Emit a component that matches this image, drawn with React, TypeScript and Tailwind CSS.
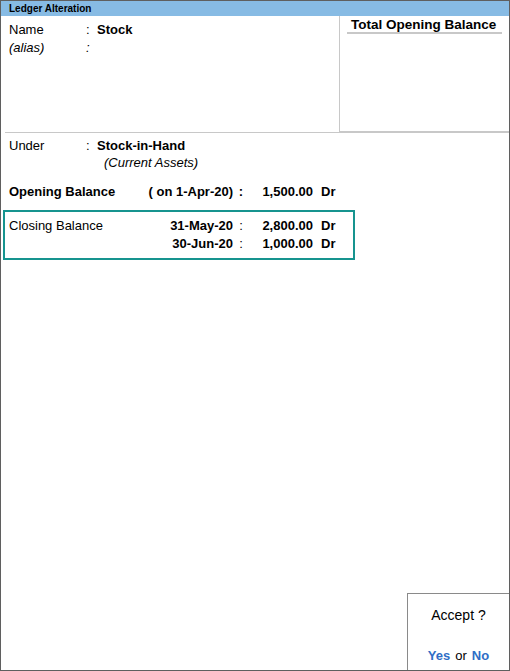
import React from 'react';

const font = { fontFamily: '"Liberation Sans", Arial, sans-serif' };

function BalanceRow({ label, date, amount, bold }: { label?: string; date: string; amount: string; bold?: boolean }) {
  return (
    <div className="flex w-[330px] leading-[18px] whitespace-nowrap">
      <span className={`flex-1 ${bold ? 'font-bold' : ''}`}>{label}</span>
      <span className="text-right font-bold">{date}</span>
      <span className={`w-[16px] text-center ${bold ? 'font-bold' : ''}`}>:</span>
      <span className="w-[64px] text-right font-bold">{amount}</span>
      <span className="w-[26px] pl-2 font-bold">Dr</span>
    </div>
  );
}

export default function App() {
  return (
    <div style={font} className="w-[510px] h-[671px] border border-[#5f5f5f] bg-white text-[13px] text-black flex flex-col overflow-hidden">
      <div className="h-[15px] bg-[#87bbe4] pl-2 text-[10px] font-bold leading-[15px]">Ledger Alteration</div>

      <div className="flex h-[117px]">
        <div className="flex-1 pl-[4px]">
          <div className="h-full border-b border-[#c8c8c8] pl-1 pt-[5px]">
            <div className="flex leading-[18px]">
              <span className="w-[77px]">Name</span>
              <span className="w-[11px]">:</span>
              <span className="font-bold">Stock</span>
            </div>
            <div className="flex leading-[18px] italic">
              <span className="w-[77px]">(alias)</span>
              <span>:</span>
            </div>
          </div>
        </div>
        <div className="w-[170px] border-l border-b-2 border-[#c8c8c8]">
          <div className="mx-[7px] border-b-2 border-[#c8c8c8] pl-[4px] text-[13.5px] font-bold leading-[15px] pt-px">
            Total Opening Balance
          </div>
        </div>
      </div>

      <div className="flex-1 flex flex-col">
        <div className="pl-2 pt-[4px]">
          <div className="flex leading-[17px]">
            <span className="w-[77px]">Under</span>
            <span className="w-[11px]">:</span>
            <span className="font-bold">Stock-in-Hand</span>
          </div>
          <div className="pl-[95px] italic leading-[17px]">(Current Assets)</div>
          <div className="mt-[12px]">
            <BalanceRow label="Opening Balance" date="( on 1-Apr-20)" amount="1,500.00" bold />
          </div>
        </div>

        <div className="ml-[2px] mt-[9px] w-[352px] border-2 border-[#16948f] pl-[4px] pt-[5px] pb-[5px]">
          <BalanceRow label="Closing Balance" date="31-May-20" amount="2,800.00" />
          <BalanceRow date="30-Jun-20" amount="1,000.00" />
        </div>

        <div className="mt-auto self-end w-[102px] h-[77px] border-l border-t border-[#8a8a8a] flex flex-col items-center">
          <div className="pt-[12px] leading-[18px] text-[14px]">Accept ?</div>
          <div className="mt-auto pb-[5px] leading-[18px] text-[13px]">
            <span className="font-bold text-[#2f6ec6]">Yes</span>
            <span className="px-[5px]">or</span>
            <span className="font-bold text-[#2f6ec6]">No</span>
          </div>
        </div>
      </div>
    </div>
  );
}
